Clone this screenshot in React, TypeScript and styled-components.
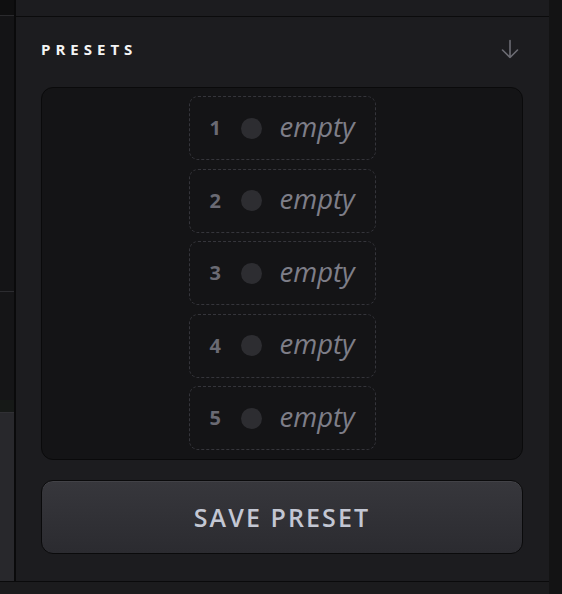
import React from "react";
import styled, { createGlobalStyle } from "styled-components";

const Global = createGlobalStyle`
  html, body { margin: 0; padding: 0; background: #121213; }
  body { font-family: "Open Sans", "Noto Sans", sans-serif; }
  * { box-sizing: border-box; }
`;

const Root = styled.div`
  display: flex;
  width: 562px;
  height: 594px;
  overflow: hidden;
  background: #121213;
`;

const MainArea = styled.div`
  display: flex;
  flex-direction: column;
  width: 549px;
`;

const MainRow = styled.div`
  display: flex;
  height: 581px;
`;

const LeftCol = styled.div`
  width: 16px;
  display: flex;
  flex-direction: column;
  border-right: 2px solid #0a0a0b;
`;

const LeftSeg = styled.div<{ $h?: number; $bg: string; $top?: string }>`
  ${(p) => (p.$h ? `height: ${p.$h}px;` : "flex: 1;")}
  background: ${(p) => p.$bg};
  ${(p) => (p.$top ? `border-top: 1px solid ${p.$top};` : "")}
`;

const RightCol = styled.div`
  width: 13px;
  background: #131314;
`;

const Center = styled.div`
  flex: 1;
  display: flex;
  flex-direction: column;
`;

const TopStrip = styled.div`
  height: 17px;
  background: #1c1c1f;
  border-bottom: 1px solid #0b0b0c;
`;

const Panel = styled.section`
  flex: 1;
  background: #1c1c1f;
  padding: 22px 26px 0 25px;
  display: flex;
  flex-direction: column;
`;

const Header = styled.header`
  height: 20px;
  display: flex;
  align-items: center;
  justify-content: space-between;
  margin-bottom: 28px;
`;

const Title = styled.h2`
  margin: 0;
  font-family: "Open Sans", "Noto Sans", sans-serif;
  font-weight: 700;
  font-size: 15px;
  line-height: 20px;
  letter-spacing: 5px;
  color: #f4f4f4;
`;

const ArrowBtn = styled.svg`
  width: 18px;
  height: 20px;
  margin-right: 4px;
  display: block;
`;

const Slots = styled.div`
  height: 373px;
  background: #141416;
  border: 1px solid #0a0a0b;
  border-radius: 12px;
  padding: 8px 0 9px;
  display: flex;
  flex-direction: column;
  align-items: center;
  gap: 8.5px;
`;

const Slot = styled.div`
  width: 187px;
  height: 64px;
  border: 1px dashed #35353b;
  border-radius: 9px;
  display: flex;
  align-items: center;
  gap: 18px;
  padding: 0 0 0 20px;
  & > * { flex-shrink: 0; }
`;

const SlotNum = styled.span`
  width: 13px;
  font-family: "Open Sans", "Noto Sans", sans-serif;
  font-weight: 700;
  font-size: 20px;
  line-height: 1;
  color: #6a6a73;
`;

const Dot = styled.span`
  width: 21px;
  height: 21px;
  border-radius: 50%;
  background: #2d2d31;
`;

const SlotLabel = styled.span`
  font-family: "Open Sans", "Noto Sans", sans-serif;
  font-style: italic;
  font-size: 27.5px;
  line-height: 1;
  color: #7e7e88;
  margin-top: -3px;
`;

const SaveButton = styled.button`
  margin-top: 20px;
  height: 74px;
  width: 100%;
  border: 1px solid #0a0a0b;
  border-radius: 12px;
  background: linear-gradient(#37373c, #2b2b30);
  box-shadow: inset 0 1px 0 rgba(255, 255, 255, 0.06);
  color: #c3c7d3;
  font-family: "Open Sans", "Noto Sans", sans-serif;
  font-weight: 600;
  font-size: 25px;
  letter-spacing: 2.1px;
  cursor: pointer;
`;

const BottomStrip = styled.div`
  flex: 1;
  background: #1b1b1d;
  border-top: 1px solid #0a0a0b;
`;

const slots = [1, 2, 3, 4, 5];

export default function App() {
  return (
    <>
      <Global />
      <Root>
        <MainArea>
          <MainRow>
            <LeftCol>
              <LeftSeg $h={15} $bg="#0f0f10" />
              <LeftSeg $h={276} $bg="#141416" $top="#2a2a2d" />
              <LeftSeg $h={109} $bg="#151517" $top="#2c2c30" />
              <LeftSeg $h={12} $bg="#161917" />
              <LeftSeg $bg="#28282c" $top="#303034" />
            </LeftCol>
            <Center>
              <TopStrip />
              <Panel>
                <Header>
                  <Title>PRESETS</Title>
                  <ArrowBtn viewBox="0 0 18 20" fill="none">
                    <path
                      d="M9 1.5v17M1.5 11l7.5 7.5 7.5-7.5"
                      stroke="#6c6c73"
                      strokeWidth="1.6"
                      strokeLinecap="round"
                      strokeLinejoin="round"
                    />
                  </ArrowBtn>
                </Header>
                <Slots>
                  {slots.map((n) => (
                    <Slot key={n}>
                      <SlotNum>{n}</SlotNum>
                      <Dot />
                      <SlotLabel>empty</SlotLabel>
                    </Slot>
                  ))}
                </Slots>
                <SaveButton>SAVE PRESET</SaveButton>
              </Panel>
            </Center>
          </MainRow>
          <BottomStrip />
        </MainArea>
        <RightCol />
      </Root>
    </>
  );
}
